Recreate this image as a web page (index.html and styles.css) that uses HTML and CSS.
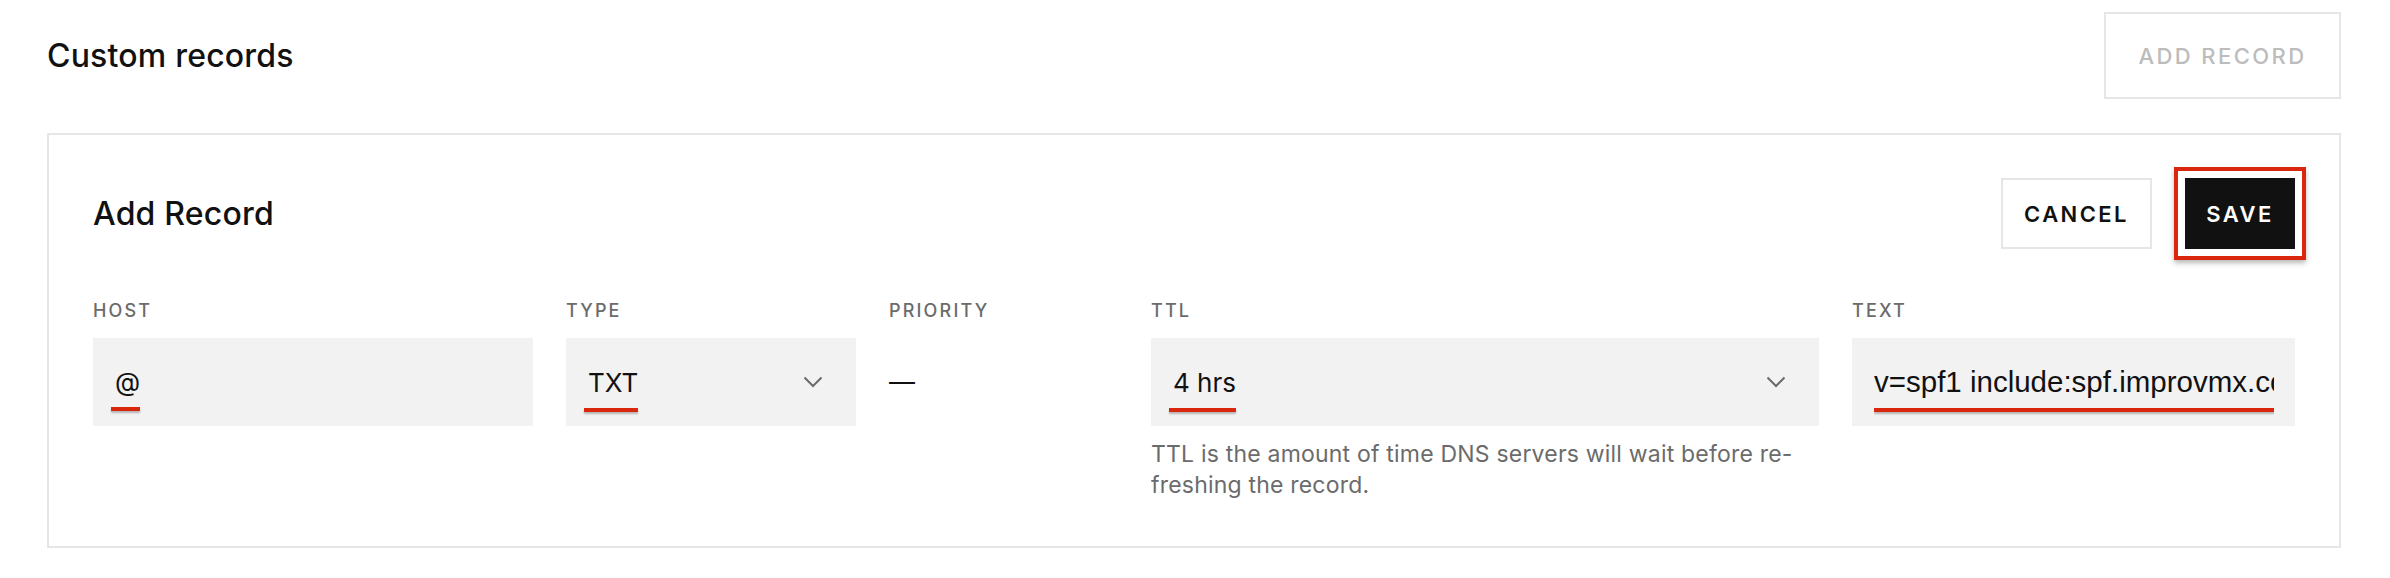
FILE: index.html
```html
<!DOCTYPE html>
<html lang="en">

<head>
    <meta charset="UTF-8">
    <meta name="viewport" content="width=device-width, initial-scale=1.0">
    <title>Custom records</title>
    <link rel="stylesheet" href="styles.css">
</head>

<body>
    <div class="page">
        <div class="page-header">
            <h2 class="page-title">Custom records</h2>
            <button type="button" class="btn btn-disabled">ADD RECORD</button>
        </div>

        <div class="card">
            <div class="card-header">
                <h3 class="card-title">Add Record</h3>
                <div class="actions">
                    <button type="button" class="btn btn-outline">CANCEL</button>
                    <button type="button" class="btn btn-dark highlight">SAVE</button>
                </div>
            </div>

            <div class="fields">
                <div class="field-col">
                    <div class="field-label">HOST</div>
                    <div class="field"><span class="mark">@</span></div>
                </div>

                <div class="field-col">
                    <div class="field-label">TYPE</div>
                    <div class="field field-select">
                        <span class="mark">TXT</span>
                        <svg class="chevron" width="20" height="12" viewBox="0 0 20 12">
                            <polyline points="1.5,1.5 10,10 18.5,1.5" fill="none" stroke="#6b6b6b" stroke-width="2"/>
                        </svg>
                    </div>
                </div>

                <div class="field-col">
                    <div class="field-label">PRIORITY</div>
                    <div class="field field-plain">&mdash;</div>
                </div>

                <div class="field-col">
                    <div class="field-label">TTL</div>
                    <div class="field field-select">
                        <span class="mark">4 hrs</span>
                        <svg class="chevron" width="20" height="12" viewBox="0 0 20 12">
                            <polyline points="1.5,1.5 10,10 18.5,1.5" fill="none" stroke="#6b6b6b" stroke-width="2"/>
                        </svg>
                    </div>
                    <p class="field-help">TTL is the amount of time DNS servers will wait before re-<br>freshing the record.</p>
                </div>

                <div class="field-col">
                    <div class="field-label">TEXT</div>
                    <div class="field">
                        <div class="field-clip"><span class="mark mark-long">v=spf1 include:spf.improvmx.com ~all</span></div>
                    </div>
                </div>
            </div>
        </div>
    </div>
</body>

</html>
```

FILE: styles.css
```css
body {
    margin: 0;
    padding: 0;
    background: #fff;
    color: #111;
    font-family: Inter, "Liberation Sans", Arial, sans-serif;
}

.page {
    padding: 12px 49px 0 47px;
}

.page-header {
    display: flex;
    justify-content: space-between;
    align-items: center;
}

.page-title {
    margin: 0;
    font-size: 32px;
    font-weight: 500;
    letter-spacing: 0.2px;
}

.btn {
    font-family: Inter, "Liberation Sans", Arial, sans-serif;
    font-size: 22px;
    font-weight: 600;
    letter-spacing: 0.11em;
    background: #fff;
    border: 2px solid #e6e6e6;
    border-radius: 0;
    cursor: pointer;
}

.btn-disabled {
    width: 237px;
    height: 87px;
    color: #bcbcbc;
    font-weight: 500;
    cursor: default;
}

.btn-outline {
    width: 151px;
    height: 71px;
    color: #111;
}

.btn-dark {
    width: 110px;
    height: 71px;
    color: #fff;
    background: #111;
    border-color: #111;
}

/* red annotation box round the save button */
.highlight {
    box-shadow: 0 0 0 7px #fff, 0 0 0 11px #d9270e, 0 3px 5px 11px rgba(0, 0, 0, 0.28);
}

.card {
    margin-top: 34px;
    border: 2px solid #e6e6e6;
    padding: 43px 44px 45px 44px;
}

.card-header {
    display: flex;
    justify-content: space-between;
    align-items: center;
}

.card-title {
    margin: 0;
    font-size: 32px;
    font-weight: 500;
    letter-spacing: 0.2px;
}

.actions {
    display: flex;
    gap: 33px;
}

.fields {
    display: grid;
    grid-template-columns: 440px 290px 229px 668px minmax(0, 1fr);
    column-gap: 33px;
    margin-top: 51px;
}

.field-col {
    min-width: 0;
}

.field-label {
    font-size: 18px;
    line-height: 22px;
    font-weight: 500;
    letter-spacing: 0.12em;
    color: #6b6b6b;
    margin-bottom: 16px;
}

.field {
    height: 88px;
    line-height: 88px;
    background: #f2f2f2;
    padding: 0 21px 0 22px;
    font-size: 26px;
    color: #111;
}

.field-select {
    display: flex;
    justify-content: space-between;
    align-items: center;
    padding-right: 33px;
}

.field-select .mark {
    line-height: normal;
}

.field-plain {
    background: none;
    padding: 0;
}

.field-clip {
    overflow: hidden;
    white-space: nowrap;
}

.mark {
    position: relative;
}

/* red annotation underline */
.mark::after {
    content: "";
    position: absolute;
    left: -4px;
    right: 0;
    top: calc(100% + 10px);
    height: 4px;
    background: #d9270e;
    box-shadow: 0 2px 2px rgba(0, 0, 0, 0.25);
}

.mark-long {
    font-family: "Liberation Sans", Arial, sans-serif;
    font-size: 29.5px;
}

.mark-long::after {
    left: 0;
}

.chevron {
    display: block;
}

.field-help {
    margin: 13px 0 0 0;
    font-size: 23px;
    line-height: 31px;
    letter-spacing: 0.2px;
    color: #6b6b6b;
}
```
